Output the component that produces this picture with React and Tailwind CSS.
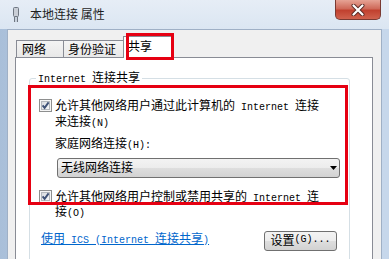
import React from "react";

const M = ({ children }) => (
  <span className="font-['Liberation_Mono',monospace] text-[10px]">{children}</span>
);

const Check = () => (
  <svg width="13" height="13" viewBox="0 0 13 13" className="shrink-0">
    <defs>
      <linearGradient id="cbg" x1="0" y1="0" x2="1" y2="1">
        <stop offset="0" stopColor="#d6d9de" />
        <stop offset="1" stopColor="#fbfbfb" />
      </linearGradient>
    </defs>
    <rect x="0.5" y="0.5" width="12" height="12" fill="#f6f6f6" stroke="#8e8f8f" />
    <rect x="2.5" y="2.5" width="8" height="8" fill="url(#cbg)" stroke="#b4b8bd" />
    <path d="M3.6 6.4 L5.6 8.9 L9.6 3.4" fill="none" stroke="#3f5277" strokeWidth="1.9" />
  </svg>
);

export default function App() {
  return (
    <div className="relative w-[389px] h-[259px] overflow-hidden flex flex-col bg-[linear-gradient(90deg,#a9bfd9,#c9d9ec_40%,#c6d7eb)] font-['Noto_Sans_CJK_SC',sans-serif] text-[12px] leading-[12.5px] text-black">
      {/* title bar */}
      <div className="h-[29px] shrink-0 flex bg-[linear-gradient(#e6edf6,#dbe6f2)] pl-[13px] pr-[8px]">
        <div className="flex items-center h-full">
          <svg width="6" height="16" viewBox="0 0 6 16">
            <rect x="0.5" y="0.5" width="5" height="9" rx="1" fill="#c9ced6" stroke="#6f7782" />
            <rect x="1" y="10" width="1.2" height="5" fill="#6f7782" />
            <rect x="3.8" y="10" width="1.2" height="5" fill="#6f7782" />
          </svg>
          <span className="ml-[11px] text-[#1e1e1e]">本地连接 属性</span>
        </div>
        <div className="ml-auto self-start w-[46px] h-[20px] rounded-b-[5px] border border-t-0 border-[#7a3a32] bg-[linear-gradient(#e6a395,#cf6a5a_45%,#c1412f_55%,#d0624e)] flex items-center justify-center">
          <svg width="14" height="12" viewBox="0 0 14 12">
            <path d="M2.5 1.5 L11.5 10.5 M11.5 1.5 L2.5 10.5" stroke="#5a2a25" strokeWidth="4" strokeLinecap="round" />
            <path d="M2.5 1.5 L11.5 10.5 M11.5 1.5 L2.5 10.5" stroke="#ffffff" strokeWidth="2.2" strokeLinecap="round" />
          </svg>
        </div>
      </div>

      {/* client area */}
      <div className="flex-1 mx-[7px] border-t border-x border-[#9fb0c6] bg-[#f0f0f0] overflow-hidden flex flex-col">
        {/* tabs */}
        <div className="flex items-end pl-[8px] pt-[6px]">
          <div className="w-[48px] h-[17px] mb-[1px] border border-b-0 border-[#898c95] bg-linear-to-b from-[#f4f4f4] to-[#e8e8e8] flex items-center pl-[5px]">
            网络
          </div>
          <div className="-ml-px w-[62px] h-[17px] mb-[1px] border border-b-0 border-[#898c95] bg-linear-to-b from-[#f4f4f4] to-[#e8e8e8] flex items-center pl-[4px]">
            身份验证
          </div>
          <div className="relative z-10 -ml-[2px] w-[50px] h-[22px] border border-b-0 border-[#898c95] bg-white flex items-start pt-[3px] pl-[4px]">
            共享
          </div>
        </div>

        {/* panel */}
        <div className="-mt-px ml-[7px] w-[358px] h-[230px] shrink-0 border border-[#898c95] bg-white">
          <fieldset className="ml-[13px] mt-[13px] w-[321px] border border-[#d5dfe5] rounded-[3px] pb-[12px]">
            <legend className="ml-[6px] px-[2px] leading-[12px]">
              <M>Internet </M>连接共享
            </legend>

            <div className="mt-[13px] ml-[9px] flex items-start gap-[3px]">
              <Check />
              <div className="whitespace-nowrap">
                允许其他网络用户通过此计算机的<M> Internet </M>连接
                <br />
                来连接<M>(N)</M>
              </div>
            </div>

            <div className="mt-[7px] ml-[25px] whitespace-nowrap">
              家庭网络连接<M>(H):</M>
            </div>

            <div className="mt-[5px] ml-[27px] w-[283px] h-[20px] flex items-center pl-[3px] pr-[2px] border border-[#707070] rounded-[3px] bg-[linear-gradient(#f3f3f3,#ececec_50%,#dedede_50%,#d2d2d2)]">
              <span>无线网络连接</span>
              <svg className="ml-auto" width="7" height="4" viewBox="0 0 7 4">
                <path d="M0 0 H7 L3.5 4 Z" fill="#000" />
              </svg>
            </div>

            <div className="mt-[12px] ml-[9px] flex items-start gap-[3px]">
              <Check />
              <div className="whitespace-nowrap">
                允许其他网络用户控制或禁用共享的<M> Internet </M>连
                <br />
                接<M>(O)</M>
              </div>
            </div>

            <div className="mt-[10px] flex items-start">
              <a className="ml-[11px] mt-[1px] text-[#0066cc] underline whitespace-nowrap cursor-pointer">
                使用<M> ICS (Internet </M>连接共享<M>)</M>
              </a>
              <div className="ml-auto mr-[12px] w-[73px] h-[20px] border border-[#707070] rounded-[3px] bg-[linear-gradient(#f3f3f3,#ececec_50%,#dedede_50%,#d2d2d2)] flex items-center justify-center whitespace-nowrap">
                设置<M>(G)...</M>
              </div>
            </div>
          </fieldset>
        </div>
      </div>

      {/* annotation boxes */}
      <div className="absolute left-[126px] top-[33px] w-[48px] h-[27px] border-[3px] border-[#e60012] z-20" />
      <div className="absolute left-[28px] top-[85px] w-[320px] h-[120px] border-[3px] border-[#e60012] z-20" />
    </div>
  );
}
